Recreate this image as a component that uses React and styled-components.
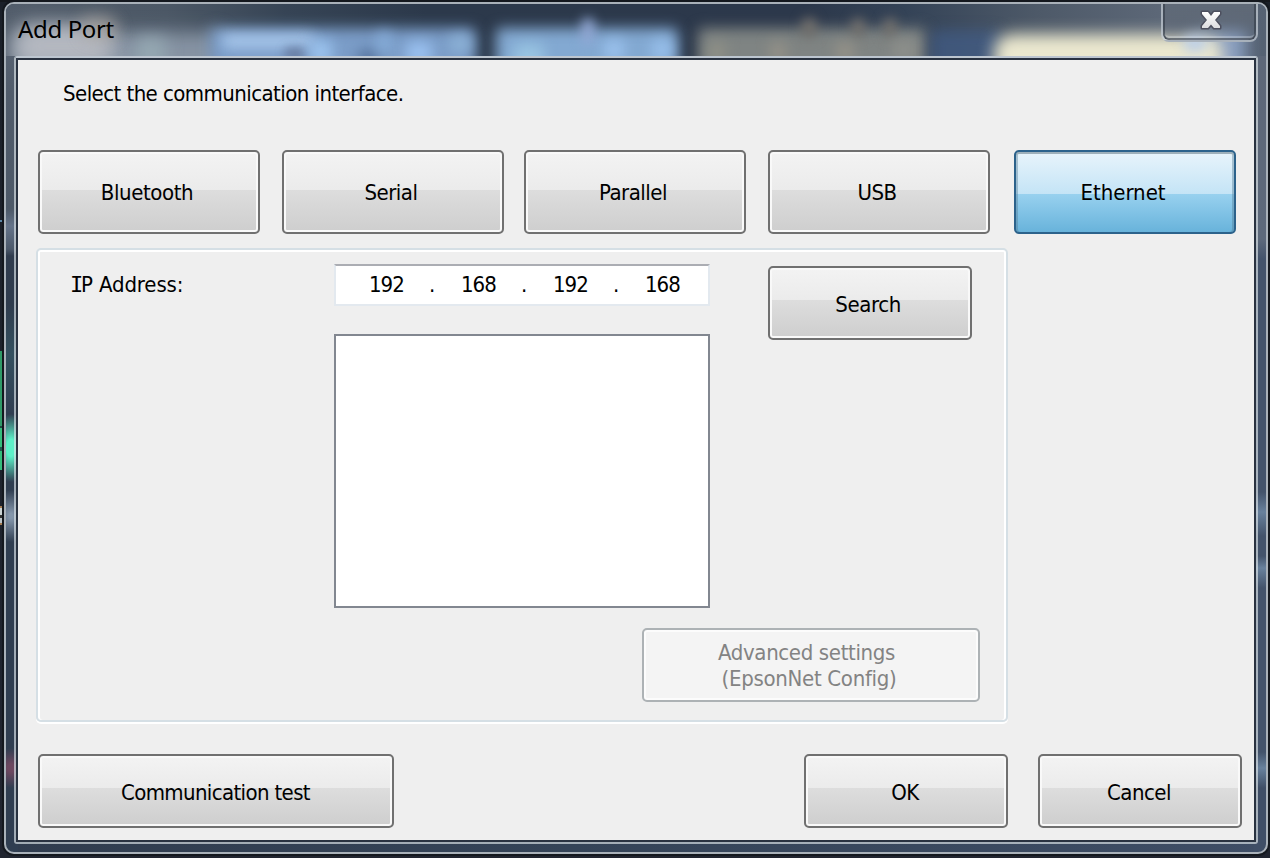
import React from 'react';
import styled, { createGlobalStyle, css } from 'styled-components';

const GlobalStyle = createGlobalStyle`
  *, *::before, *::after { box-sizing: border-box; }
  body { margin: 0; background: #191d26; overflow: hidden; }
`;

const Desktop = styled.main`
  width: 1270px;
  height: 858px;
  padding: 2px 2px 4px 4px;
  overflow: hidden;
  font-family: "DejaVu Sans Condensed", "DejaVu Sans", Tahoma, sans-serif;
  font-stretch: condensed;
  font-size: 22px;
  line-height: 26px;
  color: #000;
  background:
    linear-gradient(#5d88a8, #5d88a8) 0 220px / 2px 2px no-repeat,
    linear-gradient(#2f9a68 0 75px, #1c4a42 75px 77px, #35bd7c 77px 96px, #205a50 96px 100px, #35bd7c 100px) 0 351px / 2px 119px no-repeat,
    linear-gradient(#a37a50 0 2px, #ccd4d4 2px 9px, #333 9px 12px, #bcc4c8 12px 17px, #a37a50 17px) 0 506px / 2px 19px no-repeat,
    linear-gradient(#15181d, #15181d) 0 0 / 100% 2px no-repeat,
    linear-gradient(#1b2029, #20242f);
`;

const Window = styled.section`
  position: relative;
  width: 1264px;
  height: 852px;
  padding: 0 8px 8px;
  border: 2px solid #a9b1b9;
  border-radius: 10px;
  box-shadow: 0 0 0 2px #14181e;
  background:
    radial-gradient(ellipse 18px 34px at 5px 444px, #5df0c8 25%, transparent) 0 0 / 12px 100% no-repeat,
    radial-gradient(ellipse 18px 26px at 5px 512px, #8496ab 10%, transparent) 0 0 / 12px 100% no-repeat,
    radial-gradient(ellipse 16px 20px at 5px 764px, #6d4860 20%, transparent) 0 0 / 12px 100% no-repeat,
    linear-gradient(transparent 52px, #566170 52px, #515c6b 90px, #4d5968 205px, #65748a 222px, #4c596b 245px, #303c4e 252px, #2f3c4e 300px, #34505f 350px, #303e51 410px, #303e51 100%) 0 0 / 12px 100% no-repeat,
    linear-gradient(transparent 52px, #5d6778 52px, #5d697b 235px, #43536b 255px, #43536b 488px, #68819d 508px, #43536b 532px, #43536b 552px, #68819d 564px, #43536b 584px, #43536b 748px, #68819d 764px, #3f4e66 784px) 100% 0 / 12px 100% no-repeat,
    linear-gradient(90deg, #303c4e, #344357 45%, #3e4d65);
`;

const TitleBar = styled.header`
  position: relative;
  height: 52px;
  margin: 0 -8px;
  padding: 9px 12px;
  overflow: hidden;
  border-radius: 8px 8px 0 0;
  background:
    linear-gradient(90deg, #525d6b 0, #4c5866 160px, #364455 280px, #2c394b 420px, #2c384b 800px, #344357 900px, #4d5968 1030px, #5d6878 1160px, #566273);
`;

const Backdrop = styled.div`
  position: absolute;
  inset: 0;
  overflow: hidden;
`;

const Glow = styled.i`
  position: absolute;
  left: ${p => p.$x}px;
  top: ${p => p.$y}px;
  width: ${p => p.$w}px;
  height: ${p => p.$h}px;
  border-radius: ${p => p.$r || 5}px;
  background: ${p => p.$color};
  opacity: ${p => p.$o || 1};
  filter: blur(${p => p.$blur || 7}px);
`;

const Title = styled.h1`
  position: relative;
  margin: 0;
  font: 400 24px/32px "Noto Sans", "Open Sans", sans-serif;
  letter-spacing: -0.35px;
`;

const CloseButton = styled.button`
  position: absolute;
  top: -2px;
  right: 8px;
  width: 97px;
  height: 40px;
  padding: 0;
  display: grid;
  place-items: center;
  border: 2px solid rgba(214, 222, 230, 0.62);
  border-top: 0;
  border-radius: 0 0 8px 8px;
  background: linear-gradient(#5f6977 10%, rgba(95, 105, 119, 0.85) 50%, rgba(110, 125, 145, 0.1));
  box-shadow: inset 2px 0 0 rgba(50, 58, 70, 0.6), inset -2px 0 0 rgba(50, 58, 70, 0.6), inset 0 -2px 0 rgba(50, 58, 70, 0.6), inset 0 -4px 0 rgba(214, 222, 230, 0.35);
`;

const Client = styled.div`
  height: 788px;
  border: 2px solid rgba(224, 232, 236, 0.65);
  border-top-color: #bdc6d0;
  border-radius: 3px;
`;

const Page = styled.div`
  height: 784px;
  border: 2px solid #293240;
  padding: 21px 12px 12px 18px;
  background: #efefef;
`;

const Intro = styled.p`
  margin: 0 0 43px 27px;
  height: 26px;
  letter-spacing: ${p => p.$ls}px;
`;

const Interfaces = styled.nav`
  display: flex;
  padding-left: 2px;
`;

const tones = {
  normal: css`
    color: #000;
    border-color: #707070;
    background: linear-gradient(#f3f3f3, #ebebeb ${p => p.$split}, #dddddd ${p => p.$split}, #cecece);
    box-shadow: inset 0 0 0 2px #f9f9f9;
  `,
  active: css`
    color: #000;
    border-color: #2c628b;
    background: linear-gradient(#e8f4fb, #c4e4f6 52.5%, #98d1ef 52.5%, #68b3db);
    box-shadow: inset 0 2px 0 #9eb0ba, inset 2px 0 0 rgba(80, 120, 145, 0.4), inset -2px 0 0 rgba(80, 120, 145, 0.4);
  `,
  disabled: css`
    color: #838383;
    border-color: #adb2b5;
    background: #f4f4f4;
    box-shadow: inset 0 0 0 2px #fcfcfc;
  `,
};

const PushButton = styled.button`
  flex: none;
  width: ${p => p.$w}px;
  height: ${p => p.$h || 74}px;
  margin: 0 0 0 ${p => p.$gap || 0}px;
  padding: ${p => p.$drop ?? 4}px ${p => p.$shift ?? 4}px 0 0;
  border: 2px solid;
  border-radius: 5px;
  font: inherit;
  letter-spacing: ${p => p.$ls ?? -0.5}px;
  white-space: pre-line;
  ${p => tones[p.$tone || 'normal']}
`;

const Group = styled.section`
  display: flex;
  flex-direction: column;
  width: 972px;
  height: 474px;
  margin: 14px 0 32px;
  border: 2px solid #d5dfe5;
  border-radius: 5px;
  padding: 14px 26px 18px 33px;
  box-shadow: inset 0 2px 0 #fff, inset 2px 0 0 #fff, inset -2px 0 0 #fff, 0 2px 0 #fff;
`;

const Fields = styled.div`
  display: grid;
  grid-template-columns: 263px 376px 204px;
  column-gap: 0;
  height: 344px;
`;

const FieldLabel = styled.label`
  padding-top: 8px;
  letter-spacing: ${p => p.$ls}px;
`;

const SlabLetter = styled.span`
  margin: 0 -2px 0 -1px;
  font-family: "DejaVu Sans Mono", monospace;
  line-height: 1;
`;

const FieldStack = styled.div`
  display: flex;
  flex-direction: column;
  gap: 28px;
`;

const AddressBox = styled.div`
  display: flex;
  height: 42px;
  padding: 6px 0 0 33px;
  border: 2px solid #e3e9ef;
  border-top-color: #abadb3;
  background: #fff;
  letter-spacing: -1px;
`;

const Octet = styled.span`
  width: 60px;
`;

const Dot = styled.span`
  width: 32px;
`;

const DeviceList = styled.div`
  height: 274px;
  border: 2px solid #828790;
  background: #fff;
`;

const SearchCell = styled.div`
  padding: 2px 0 0 58px;
`;

const AdvancedRow = styled.div`
  display: flex;
  justify-content: flex-end;
  margin-top: 20px;
`;

const Shifted = styled.span`
  display: block;
  padding-left: ${p => p.$x}px;
  letter-spacing: ${p => p.$ls}px;
`;

const Footer = styled.footer`
  display: flex;
  padding-left: 2px;
`;

const glows = [
  { $x: 6, $y: 28, $w: 210, $h: 50, $color: '#8693a3', $blur: 9 },
  { $x: 8, $y: 20, $w: 100, $h: 44, $color: '#b4b8c0', $blur: 10, $r: 18 },
  { $x: 76, $y: 12, $w: 34, $h: 24, $color: '#a9a39c', $blur: 8, $o: 0.6 },
  { $x: 130, $y: 34, $w: 30, $h: 30, $color: '#94a7b1', $blur: 8 },
  { $x: 204, $y: 24, $w: 266, $h: 60, $color: '#7b9dc8' },
  { $x: 490, $y: 24, $w: 182, $h: 60, $color: '#83a9d2' },
  { $x: 692, $y: 24, $w: 228, $h: 60, $color: '#7f8483' },
  { $x: 216, $y: 30, $w: 92, $h: 14, $color: '#b0cff2', $o: 0.9 },
  { $x: 278, $y: 43, $w: 22, $h: 14, $color: '#64789c', $blur: 5, $o: 0.8 },
  { $x: 304, $y: 36, $w: 22, $h: 24, $color: '#9bc3ee' },
  { $x: 352, $y: 46, $w: 20, $h: 16, $color: '#54719a' },
  { $x: 372, $y: 28, $w: 12, $h: 20, $color: '#88b0dc' },
  { $x: 400, $y: 38, $w: 26, $h: 22, $color: '#9ac1f0' },
  { $x: 444, $y: 32, $w: 20, $h: 16, $color: '#8eb4d8' },
  { $x: 508, $y: 40, $w: 30, $h: 26, $color: '#98c4e2' },
  { $x: 576, $y: 14, $w: 12, $h: 26, $color: '#93a9d6', $blur: 6 },
  { $x: 598, $y: 36, $w: 20, $h: 20, $color: '#9bc2ee' },
  { $x: 646, $y: 36, $w: 20, $h: 20, $color: '#98c0ec' },
  { $x: 702, $y: 38, $w: 18, $h: 20, $color: '#8f9086' },
  { $x: 764, $y: 38, $w: 16, $h: 20, $color: '#959288' },
  { $x: 796, $y: 14, $w: 14, $h: 20, $color: '#73706c', $blur: 6 },
  { $x: 846, $y: 14, $w: 12, $h: 20, $color: '#73706c', $blur: 6 },
  { $x: 878, $y: 14, $w: 12, $h: 20, $color: '#73706c', $blur: 6 },
  { $x: 830, $y: 38, $w: 18, $h: 20, $color: '#959288' },
  { $x: 886, $y: 36, $w: 24, $h: 20, $color: '#8d8f8b' },
  { $x: 925, $y: 26, $w: 70, $h: 50, $color: '#425d88', $o: 0.7 },
  { $x: 1190, $y: 20, $w: 50, $h: 50, $color: '#8fa5c7', $o: 0.9, $blur: 8 },
  { $x: 988, $y: 30, $w: 228, $h: 50, $color: '#ebe8cf', $blur: 8, $r: 18 },
  { $x: 1178, $y: 28, $w: 22, $h: 20, $color: '#bfd0e5', $blur: 6 },
];

const CloseGlyph = () => (
  <svg width="24" height="22" viewBox="0 0 24 22">
    <defs>
      <linearGradient id="closeFill" x1="0" y1="0" x2="0" y2="1">
        <stop offset="0" stopColor="#fff" />
        <stop offset="1" stopColor="#dcdde0" />
      </linearGradient>
    </defs>
    <path
      d="M4 2H10L13 6L16 2H22V4L17 10L22 16V18H16L13 14.5L10 18H4V16L9 10L4 4Z"
      fill="url(#closeFill)"
      stroke="#4d505f"
      strokeWidth="3"
      strokeLinejoin="round"
      paintOrder="stroke"
    />
  </svg>
);

export default function App() {
  return (
    <>
      <GlobalStyle />
      <Desktop>
        <Window>
          <TitleBar>
            <Backdrop aria-hidden="true">
              {glows.map((g, i) => <Glow key={i} {...g} />)}
            </Backdrop>
            <Title>Add Port</Title>
            <CloseButton aria-label="Close"><CloseGlyph /></CloseButton>
          </TitleBar>
          <Client>
            <Page>
              <Intro $ls={-0.56}>Select the communication interface.</Intro>
              <Interfaces>
                <PushButton $w={222} $h={84} $drop={1} $split="47.5%" $ls={-0.4}>Bluetooth</PushButton>
                <PushButton $w={222} $h={84} $drop={1} $split="47.5%" $gap={22}>Serial</PushButton>
                <PushButton $w={222} $h={84} $drop={1} $split="47.5%" $gap={20}>Parallel</PushButton>
                <PushButton $w={222} $h={84} $drop={1} $split="47.5%" $gap={22}>USB</PushButton>
                <PushButton $w={222} $h={84} $drop={1} $gap={24} $tone="active" $ls={0}>Ethernet</PushButton>
              </Interfaces>
              <Group>
                <Fields>
                  <FieldLabel $ls={-0.15}><SlabLetter>I</SlabLetter>P Address:</FieldLabel>
                  <FieldStack>
                    <AddressBox>
                      <Octet>192</Octet><Dot>.</Dot>
                      <Octet>168</Octet><Dot>.</Dot>
                      <Octet>192</Octet><Dot>.</Dot>
                      <Octet>168</Octet>
                    </AddressBox>
                    <DeviceList />
                  </FieldStack>
                  <SearchCell>
                    <PushButton $w={204} $split="46%" $ls={-0.4}>Search</PushButton>
                  </SearchCell>
                </Fields>
                <AdvancedRow>
                  <PushButton $w={338} $tone="disabled" $drop={2} $shift={9} disabled>
                    <Shifted $x={0} $ls={-0.35}>Advanced settings</Shifted>
                    <Shifted $x={5} $ls={-0.3}>(EpsonNet Config)</Shifted>
                  </PushButton>
                </AdvancedRow>
              </Group>
              <Footer>
                <PushButton $w={356} $split="46%" $shift={1} $ls={-0.63}>Communication test</PushButton>
                <PushButton $w={204} $split="46%" $gap={410} $shift={2}>OK</PushButton>
                <PushButton $w={204} $split="46%" $gap={30} $shift={2}>Cancel</PushButton>
              </Footer>
            </Page>
          </Client>
        </Window>
      </Desktop>
    </>
  );
}
